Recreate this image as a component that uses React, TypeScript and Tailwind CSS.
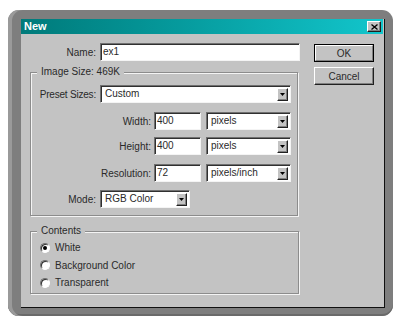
const font = { fontFamily: '"Liberation Sans", Arial, sans-serif' };

const sunken =
  'bg-white border border-t-[#707070] border-l-[#707070] border-b-[#f4f4f4] border-r-[#f4f4f4] shadow-[inset_1px_1px_0_#303030]';

const raised =
  'bg-[#c3c3c3] border border-t-white border-l-white border-b-[#202020] border-r-[#202020] shadow-[inset_-1px_-1px_0_#808080]';

const Arrow = () => (
  <div className={`flex h-[13px] w-[11px] items-center justify-center ${raised}`}>
    <svg width="5" height="3" viewBox="0 0 5 3">
      <path d="M0 0h5L2.5 3z" fill="#000" />
    </svg>
  </div>
);

const Select = ({ value, w }: { value: string; w: string }) => (
  <div className={`flex h-[18px] ${w} items-center justify-between pl-[4px] pr-[2px] ${sunken}`}>
    <span className="leading-none">{value}</span>
    <Arrow />
  </div>
);

const Input = ({ value, w }: { value: string; w: string }) => (
  <div className={`flex h-[18px] ${w} items-center pl-[2px] ${sunken}`}>
    <span className="leading-none">{value}</span>
  </div>
);

const Radio = ({ label, checked }: { label: string; checked?: boolean }) => (
  <div className="flex h-[17.5px] items-center gap-[5px]">
    <div className="flex h-[10px] w-[10px] items-center justify-center rounded-full border border-t-[#707070] border-l-[#707070] border-b-white border-r-white bg-white shadow-[inset_1px_1px_0_#303030]">
      {checked ? <div className="h-[4px] w-[4px] rounded-full bg-black" /> : null}
    </div>
    <span>{label}</span>
  </div>
);

const Group = ({ title, className, children }: { title: string; className: string; children: React.ReactNode }) => (
  <div className={`relative border border-[#8c8c8c] shadow-[inset_1px_1px_0_#f4f4f4,1px_1px_0_#f4f4f4] ${className}`}>
    <span className="absolute left-[6px] top-[-7px] bg-[#c3c3c3] px-[4px] leading-[12px]">{title}</span>
    {children}
  </div>
);

export default function App() {
  return (
    <div className="h-[327px] w-[400px] overflow-hidden bg-white text-[10px] text-[#2a2a2a]" style={font}>
      <div className="ml-[8px] mt-[10px] h-[306px] w-[385px] rounded-[11px] bg-[#7e7e7e] pl-[13px] pr-[8px] pt-[9px] shadow-[inset_4px_0_0_#9a9a9a,inset_0_-2px_0_#6a6a6a]">
        <div className="flex h-[289px] w-[364px] flex-col border-b border-r border-[#101010] bg-[#c3c3c3]">
          <div className="mr-[1px] flex h-[15px] items-center justify-between bg-linear-to-r from-[#007a7a] to-[#12c6cc] pl-[3px] pr-[2px]">
            <span className="text-[11px] font-bold text-white">New</span>
            <div className={`flex h-[11px] w-[14px] items-center justify-center ${raised}`}>
              <svg width="7" height="6" viewBox="0 0 7 6">
                <path d="M0.5 0.5l6 5M6.5 0.5l-6 5" stroke="#000" strokeWidth="1.3" />
              </svg>
            </div>
          </div>

          <div className="flex pt-[9px]">
            <div className="flex w-[279px] flex-col">
              <div className="flex items-center">
                <span className="w-[75px] whitespace-nowrap text-right">Name:</span>
                <div className="ml-[4px]">
                  <Input value="ex1" w="w-[200px]" />
                </div>
              </div>

              <Group title="Image Size: 469K" className="ml-[9px] mt-[11px] w-[268px] pb-[7px] pl-[7px] pr-[6px] pt-[12px]">
                <div className="flex items-center">
                  <span className="flex w-[58px] justify-end whitespace-nowrap tracking-[-0.2px]">Preset Sizes:</span>
                  <div className="ml-[4px]">
                    <Select value="Custom" w="w-[191px]" />
                  </div>
                </div>
                <div className="mt-[9px] flex items-center">
                  <span className="w-[114px] whitespace-nowrap text-right">Width:</span>
                  <div className="ml-[3px]"><Input value="400" w="w-[47px]" /></div>
                  <div className="ml-[5px]"><Select value="pixels" w="w-[85px]" /></div>
                </div>
                <div className="mt-[7px] flex items-center">
                  <span className="w-[114px] whitespace-nowrap text-right">Height:</span>
                  <div className="ml-[3px]"><Input value="400" w="w-[47px]" /></div>
                  <div className="ml-[5px]"><Select value="pixels" w="w-[85px]" /></div>
                </div>
                <div className="mt-[9px] flex items-center">
                  <span className="w-[114px] whitespace-nowrap text-right">Resolution:</span>
                  <div className="ml-[3px]"><Input value="72" w="w-[47px]" /></div>
                  <div className="ml-[5px]"><Select value="pixels/inch" w="w-[85px]" /></div>
                </div>
                <div className="mt-[8px] flex items-center">
                  <span className="w-[58px] whitespace-nowrap text-right">Mode:</span>
                  <div className="ml-[4px]">
                    <Select value="RGB Color" w="w-[90px]" />
                  </div>
                </div>
              </Group>

              <Group title="Contents" className="ml-[9px] mt-[15px] h-[63px] w-[269px] pl-[9px] pt-[7px]">
                <Radio label="White" checked />
                <Radio label="Background Color" />
                <Radio label="Transparent" />
              </Group>
            </div>

            <div className="ml-[14px] flex flex-col gap-[5px] pt-[1px]">
              <div className="border border-black">
                <div className={`flex h-[16px] w-[58px] items-center justify-center ${raised} border-b-[#808080] border-r-[#808080] shadow-none`}>
                  OK
                </div>
              </div>
              <div className={`flex h-[18px] w-[60px] items-center justify-center ${raised}`}>Cancel</div>
            </div>
          </div>
        </div>
      </div>
    </div>
  );
}
